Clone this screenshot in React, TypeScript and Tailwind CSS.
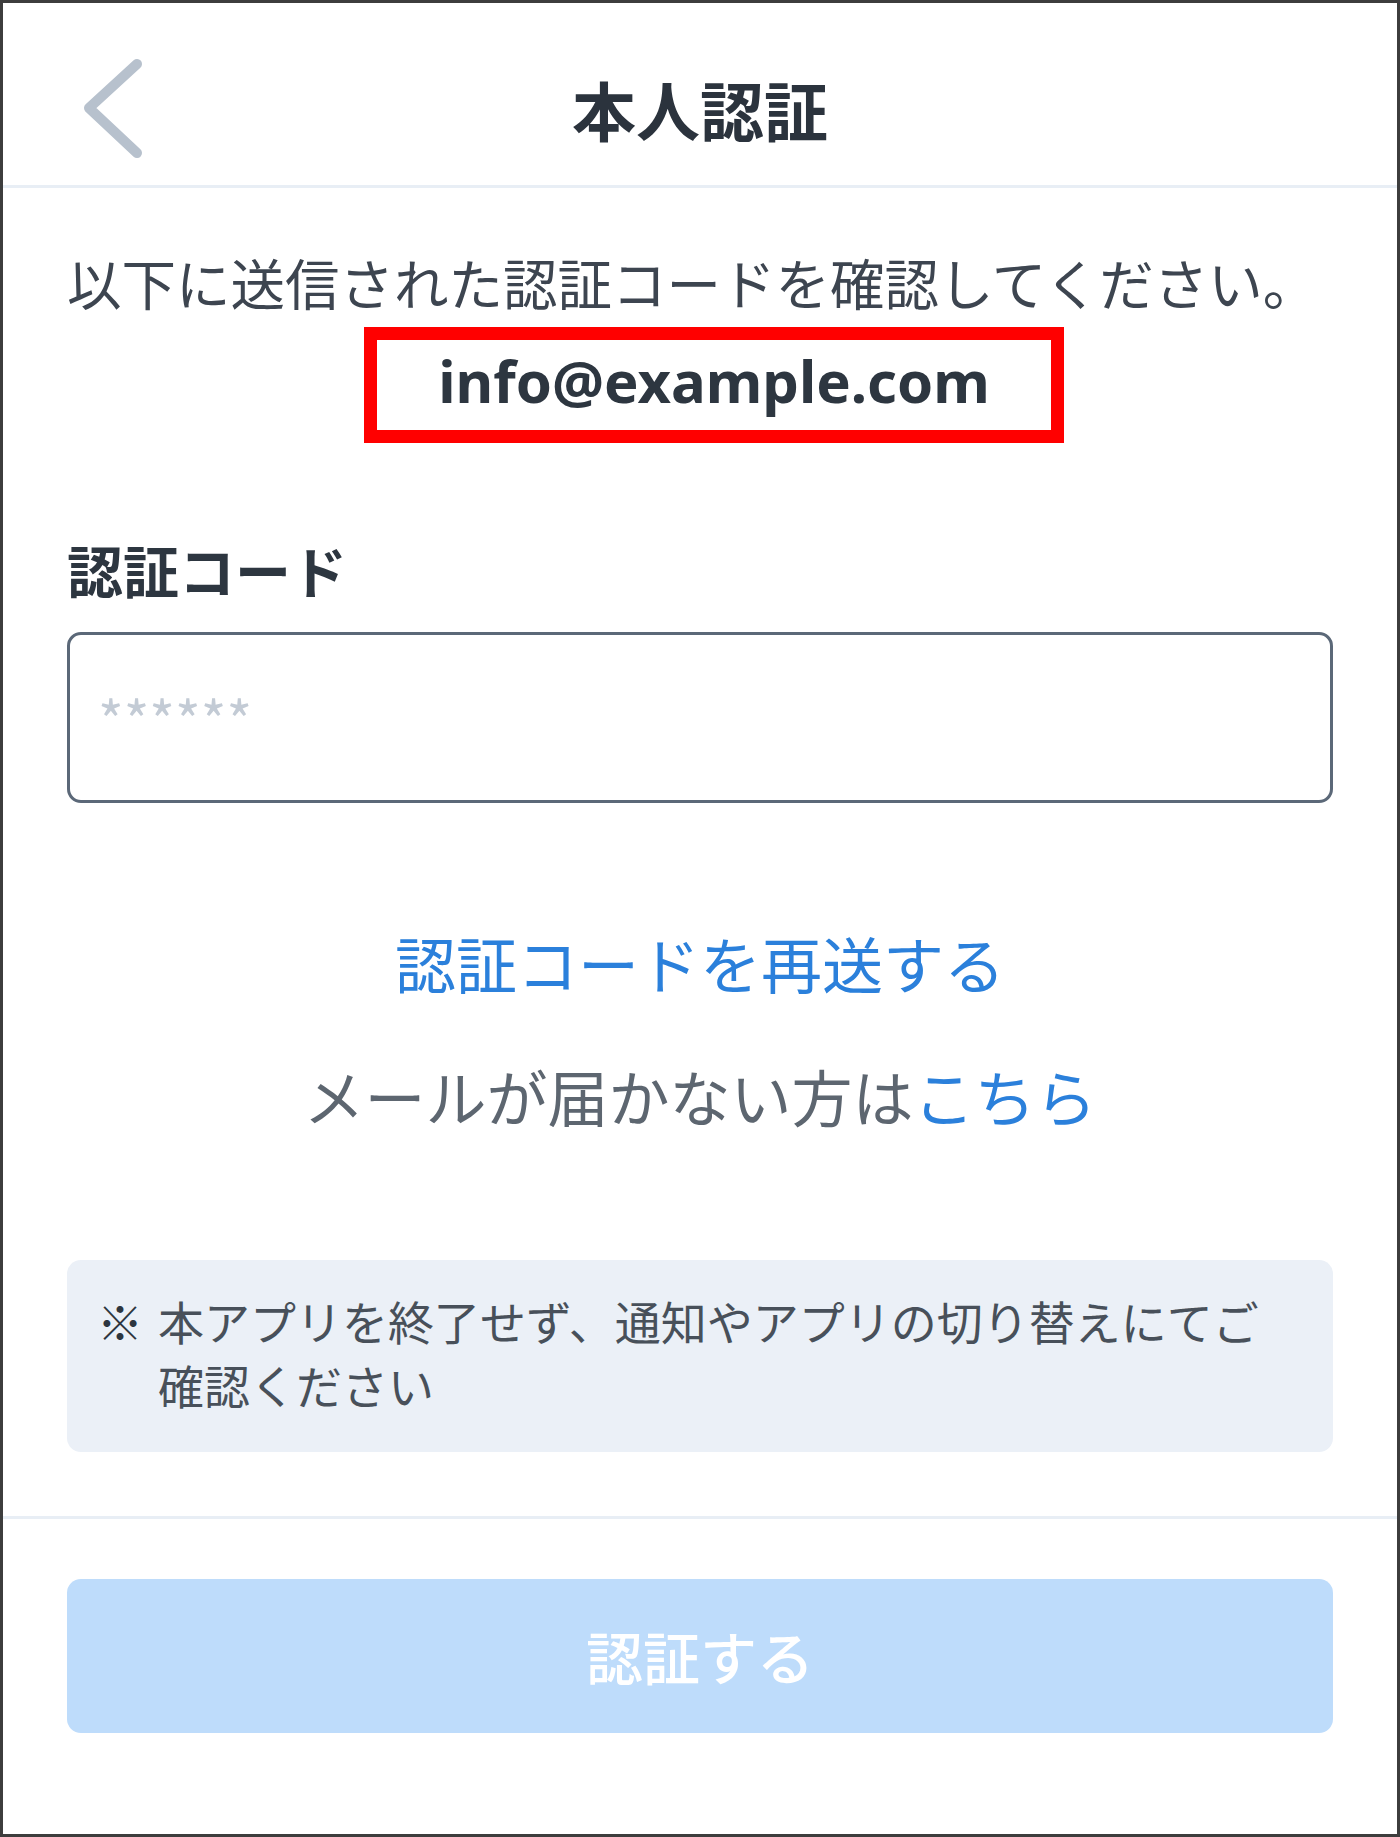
const BackChevron = () => (
  <svg width="60" height="100" viewBox="0 0 60 100" fill="none" aria-hidden="true">
    <polyline
      points="55,6 7,50 55,95"
      stroke="#b7c1cd"
      strokeWidth="10"
      strokeLinecap="round"
      strokeLinejoin="round"
    />
  </svg>
);

export default function App() {
  return (
    <div className="flex h-[1837px] w-[1400px] flex-col border-[3px] border-[#3d3d3d] bg-white font-['Noto_Sans_CJK_JP','Noto_Sans',sans-serif]">
      {/* header */}
      <header className="grid h-[185px] grid-cols-[1fr_auto_1fr] items-center border-b-[3px] border-[#e8eef5] pt-[28px]">
        <button type="button" className="flex w-fit items-center pl-[79px]">
          <BackChevron />
        </button>
        <h1 className="text-[64px] font-bold leading-[80px] text-[#2b333d]">本人認証</h1>
        <div />
      </header>

      {/* body */}
      <main className="flex flex-col px-[64px] pb-[64px] pt-[54px]">
        <p className="whitespace-nowrap text-[54.5px] leading-[80px] text-[#3d4550]">
          以下に送信された認証コードを確認してください。
        </p>

        <div className="ml-[297px] mt-[5px] flex h-[116px] w-[700px] items-center justify-center border-[13px] border-[#ff0000] pb-[8px]">
          <span className="font-['Noto_Sans',sans-serif] text-[58px] font-bold leading-none text-[#2d3640]">
            info@example.com
          </span>
        </div>

        <label className="mt-[86px] block text-[56px] font-bold leading-[80px] text-[#2d3640]">認証コード</label>
        <input
          type="text"
          placeholder="******"
          className="mt-[23px] h-[171px] w-full rounded-[14px] border-[3px] border-[#5b6878] pl-[28px] text-[55px] text-[#2d3640] outline-none placeholder:text-[#c3cbd5]"
        />

        <button type="button" className="mt-[120px] text-center text-[61px] leading-[80px] text-[#2b80db]">
          認証コードを再送する
        </button>

        <p className="mt-[53px] text-center text-[61px] leading-[80px] text-[#5d6670]">
          メールが届かない方は<span className="text-[#2b80db]">こちら</span>
        </p>

        <div className="mt-[124px] flex gap-[15px] rounded-[14px] bg-[#ebf0f7] pb-[36px] pl-[30px] pr-[40px] pt-[28px] text-[46px] leading-[64px] text-[#48505a]">
          <span className="shrink-0 font-bold text-[#2d3640]">※</span>
          <span>本アプリを終了せず、通知やアプリの切り替えにてご確認ください</span>
        </div>
      </main>

      {/* footer */}
      <footer className="border-t-[3px] border-[#e8eef5] px-[64px] pt-[60px]">
        <button
          type="button"
          disabled
          className="flex h-[154px] w-full items-center justify-center rounded-[14px] bg-[#bedcfb] text-[57px] font-medium text-white"
        >
          認証する
        </button>
      </footer>
    </div>
  );
}
